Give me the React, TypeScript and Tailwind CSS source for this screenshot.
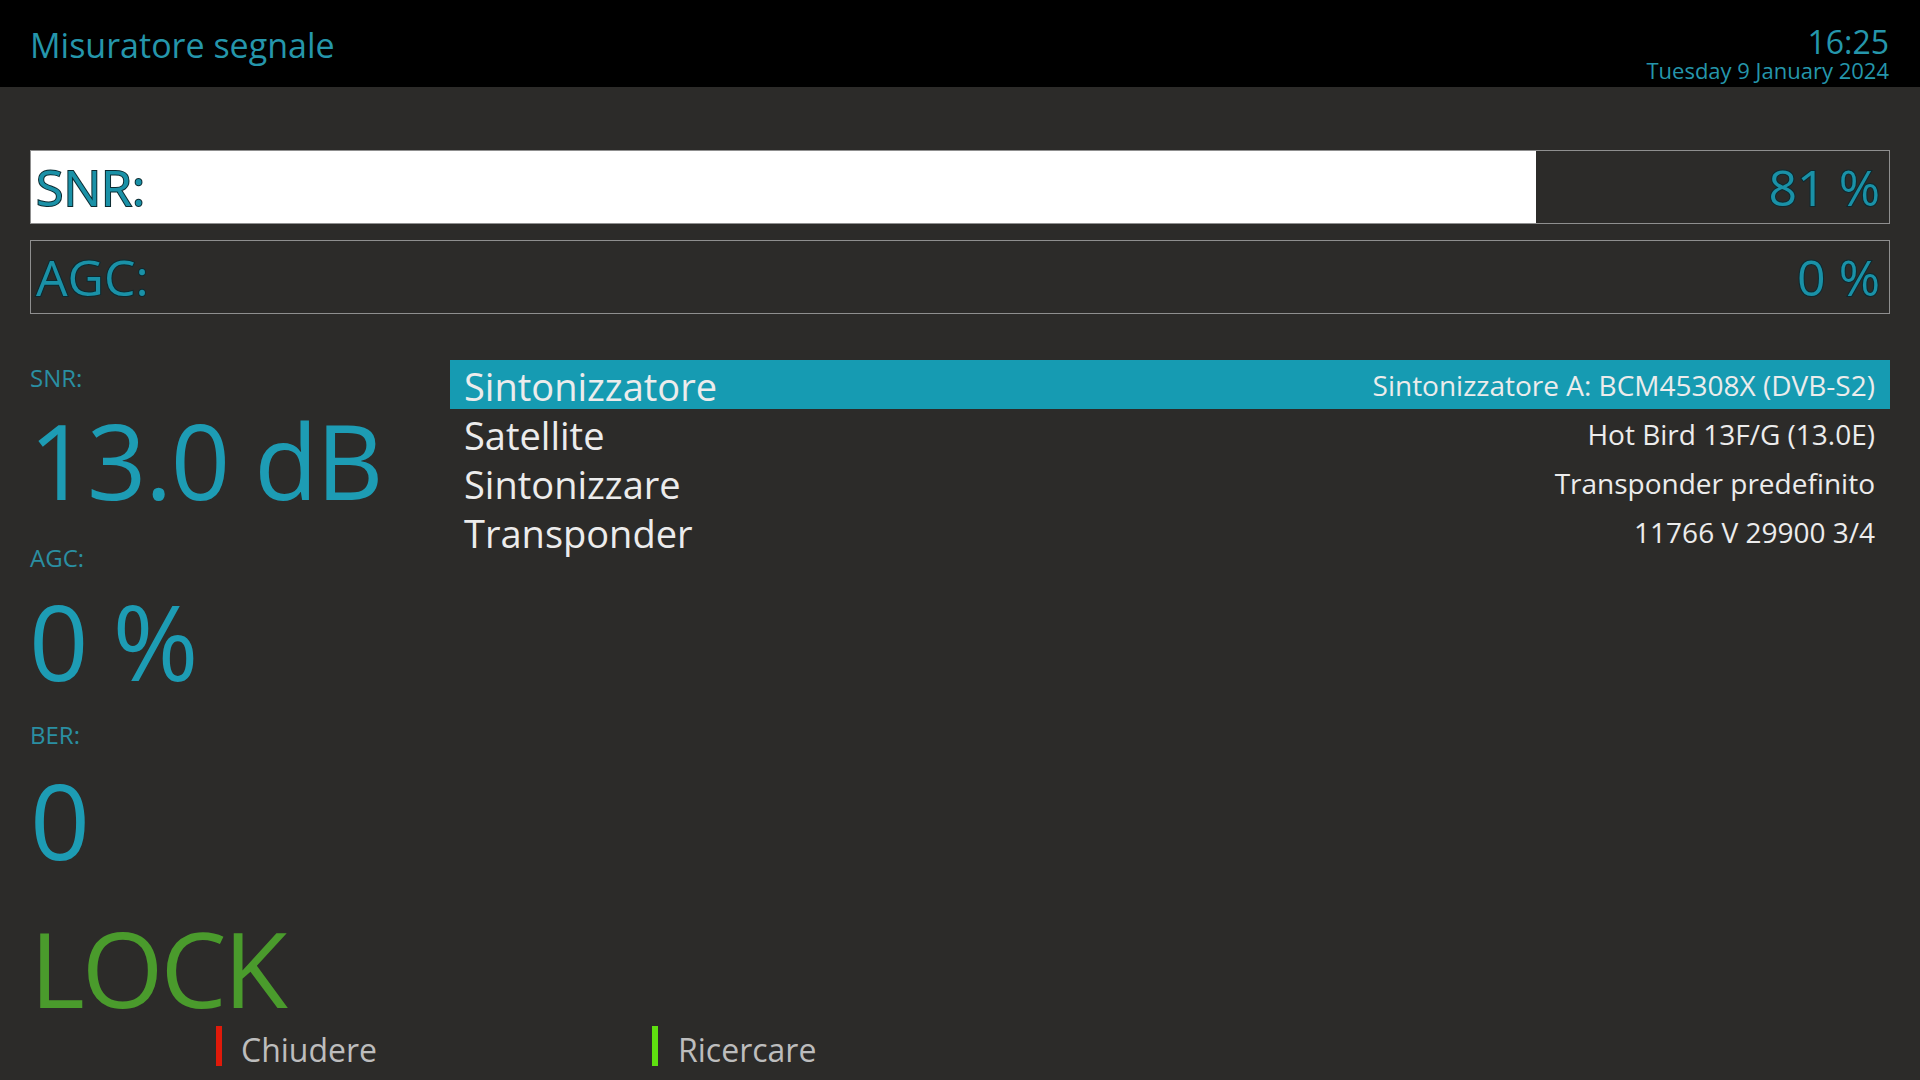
import React from "react";

const rows = [
  { label: "Sintonizzatore", value: "Sintonizzatore A: BCM45308X (DVB-S2)", active: true },
  { label: "Satellite", value: "Hot Bird 13F/G (13.0E)" },
  { label: "Sintonizzare", value: "Transponder predefinito" },
  { label: "Transponder", value: "11766 V 29900 3/4" },
];

const outline = "[-webkit-text-stroke:2px_#0c2a30] [paint-order:stroke_fill]";

function LevelBar({ label, percent }: { label: string; percent: number }) {
  return (
    <div className="relative h-[74px] border border-[#8f8f8f] flex items-center">
      <div className="absolute left-0 top-0 bottom-0 bg-white" style={{ width: `${percent}%` }} />
      <span className={`relative pl-[5px] text-[50px] leading-none text-[#1a91a7] ${outline}`}>{label}</span>
      <span className={`relative ml-auto pr-[9px] text-[50px] leading-none text-[#1a91a7] ${outline}`}>
        {percent} %
      </span>
    </div>
  );
}

export default function App() {
  return (
    <div className="w-[1920px] h-[1080px] overflow-hidden bg-[#2c2b29] flex flex-col font-['Open_Sans','Noto_Sans',sans-serif]">
      <header className="h-[87px] bg-black flex items-start justify-between pl-[30px] pr-[31px] shrink-0">
        <div className="mt-[28px] text-[34px] leading-none text-[#2596ab]">Misuratore segnale</div>
        <div className="mt-[26px] flex flex-col items-end text-[#2596ab]">
          <div className="text-[32px] leading-none">16:25</div>
          <div className="mt-[1px] text-[22px] leading-none">Tuesday 9 January 2024</div>
        </div>
      </header>

      <div className="px-[30px] pt-[63px] flex flex-col gap-[16px]">
        <LevelBar label="SNR:" percent={81} />
        <LevelBar label="AGC:" percent={0} />
      </div>

      <div className="mt-[46px] flex">
        <div className="w-[450px] shrink-0 pl-[30px] flex flex-col text-[#1d9cb4]">
          <div className="mt-[6px] text-[24px] leading-none text-[#2a8fa2]">SNR:</div>
          <div className="mt-[18px] text-[104px] leading-none tracking-[-1.5px] ml-[-1px]">13.0 dB</div>
          <div className="mt-[34px] text-[24px] leading-none text-[#2a8fa2]">AGC:</div>
          <div className="mt-[19px] text-[104px] leading-none tracking-[-1.5px] ml-[-1px]">0 %</div>
          <div className="mt-[30px] text-[24px] leading-none text-[#2a8fa2]">BER:</div>
          <div className="mt-[20px] text-[105px] leading-none">0</div>
          <div className="mt-[43px] text-[105px] leading-none tracking-[-3px] text-[#4a9b2c]">LOCK</div>
        </div>

        <div className="flex-1 pr-[30px]">
          {rows.map((r) => (
            <div
              key={r.label}
              className={`h-[49px] flex items-center justify-between pl-[14px] pr-[15px] ${
                r.active ? "bg-[#169bb2]" : ""
              }`}
            >
              <span className="mt-[3px] text-[38px] leading-none text-[#ececec]">{r.label}</span>
              <span className="text-[28px] leading-none text-[#ececec]">{r.value}</span>
            </div>
          ))}
        </div>
      </div>

      <footer className="mt-[6px] flex items-end pl-[216px]">
        <div className="w-[436px] flex items-end">
          <div className="w-[6px] h-[40px] bg-[#e01a0a]" />
          <span className="ml-[19px] text-[32px] leading-none text-[#bdbdbd]">Chiudere</span>
        </div>
        <div className="flex items-end">
          <div className="w-[6px] h-[40px] bg-[#5fe010]" />
          <span className="ml-[20px] text-[32px] leading-none text-[#bdbdbd]">Ricercare</span>
        </div>
      </footer>
    </div>
  );
}
